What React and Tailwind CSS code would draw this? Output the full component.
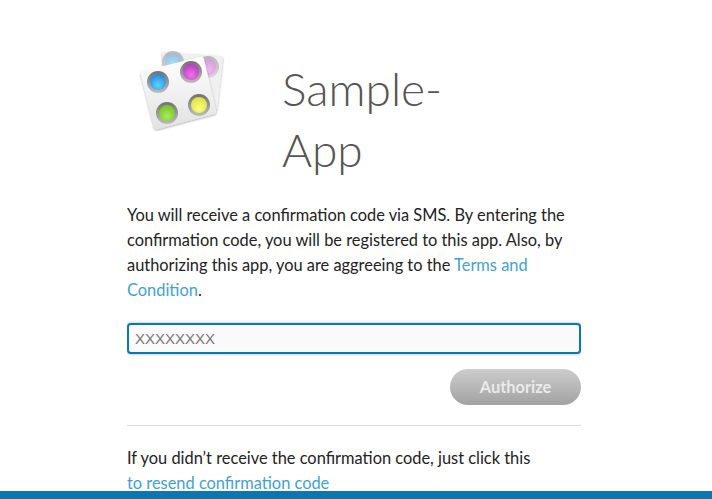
import React from 'react';

const Dot = ({ cx, cy, id, faded }) => (
  <g opacity={faded ? 0.45 : 1}>
    <circle cx={cx} cy={cy} r="11" fill="url(#ring)" />
    <circle cx={cx} cy={cy} r="8" fill={`url(#${id})`} />
  </g>
);

const Logo = () => (
  <svg width="92" height="92" viewBox="136 46 92 92">
    <defs>
      <linearGradient id="card" x1="0" y1="0" x2="0" y2="1">
        <stop offset="0" stopColor="#ffffff" />
        <stop offset="1" stopColor="#e2e2e2" />
      </linearGradient>
      <linearGradient id="ring" x1="0" y1="0" x2="0" y2="1">
        <stop offset="0" stopColor="#707070" />
        <stop offset="1" stopColor="#bdbdbd" />
      </linearGradient>
      <radialGradient id="blue" cx="0.5" cy="0.7" r="0.7">
        <stop offset="0" stopColor="#5fd4fb" />
        <stop offset="1" stopColor="#2288dc" />
      </radialGradient>
      <radialGradient id="magenta" cx="0.5" cy="0.7" r="0.7">
        <stop offset="0" stopColor="#ee74e6" />
        <stop offset="1" stopColor="#bb38c6" />
      </radialGradient>
      <radialGradient id="green" cx="0.5" cy="0.7" r="0.7">
        <stop offset="0" stopColor="#a8ec58" />
        <stop offset="1" stopColor="#74c028" />
      </radialGradient>
      <radialGradient id="yellow" cx="0.5" cy="0.7" r="0.7">
        <stop offset="0" stopColor="#fbff80" />
        <stop offset="1" stopColor="#dcdf40" />
      </radialGradient>
      <filter id="soft" x="-20%" y="-20%" width="140%" height="140%">
        <feDropShadow dx="0" dy="1" stdDeviation="1.2" floodColor="#000000" floodOpacity="0.35" />
      </filter>
    </defs>
    <path d="M162 52 L221 56 Q223 56 223 58 L217 110 L165 90 Z" fill="#f0f0f0" filter="url(#soft)" />
    <Dot cx={173} cy={62} id="blue" faded />
    <Dot cx={208} cy={67} id="magenta" faded />
    <path d="M143 71 L200 57 Q203 56 204 59 L216 110 Q217 113 214 114 L158 129 Q155 130 154 127 L141 75 Q140 72 143 71 Z" fill="url(#card)" filter="url(#soft)" />
    <Dot cx={158} cy={82} id="blue" />
    <Dot cx={191} cy={72} id="magenta" />
    <Dot cx={167} cy={113} id="green" />
    <Dot cx={199} cy={105} id="yellow" />
  </svg>
);

export default function App() {
  return (
    <div className="h-[499px] overflow-hidden bg-white font-['Lato','Liberation_Sans',sans-serif] text-[16.4px] text-[#222]">
      <div className="w-[454px] ml-[127px] h-[491px] overflow-hidden">
        <div className="flex pt-[46px]">
          <div className="w-[155px] pl-[9px]"><Logo /></div>
          <h1 className="w-[190px] mt-[12px] text-[46px] leading-[61px] font-light text-[#555]">Sample-App</h1>
        </div>
        <p className="mt-[22px] leading-[25px]">
          You will receive a confirmation code via SMS. By entering the confirmation code, you will be registered to this app. Also, by authorizing this app, you are aggreeing to the <a className="text-[#3fa2d2]">Terms and Condition</a>.
        </p>
        <input
          placeholder="XXXXXXXX"
          className="mt-[21px] block w-full h-[31px] px-[6px] rounded border-2 border-[#0a78b4] bg-[#fafafa] text-[15px] font-['Liberation_Sans',sans-serif] placeholder:text-[#777] outline-none shadow-[0_0_3px_rgba(0,0,0,0.35)]"
        />
        <div className="flex justify-end mt-[15px]">
          <button className="w-[131px] h-[36px] rounded-full bg-gradient-to-b from-[#cdcdcd] to-[#a2a2a2] text-[#eaeaea] font-bold">Authorize</button>
        </div>
        <hr className="mt-[20px] border-[#ddd]" />
        <p className="mt-[19px] leading-[25px]">If you didn’t receive the confirmation code, just click this</p>
        <a className="block leading-[25px] text-[#3fa2d2]">to resend confirmation code</a>
      </div>
      <div className="h-[8px] bg-[#0b76b0]" />
    </div>
  );
}
